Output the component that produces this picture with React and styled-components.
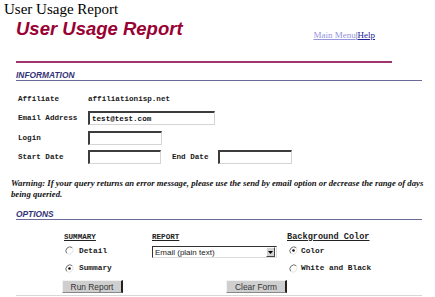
import React from "react";
import styled, { createGlobalStyle } from "styled-components";

const GlobalStyle = createGlobalStyle`
  html, body {
    margin: 0;
    padding: 0;
    background: #fff;
  }
  body {
    font-family: "Liberation Serif", "Times New Roman", serif;
    color: #000;
  }
`;

const mono = `"Liberation Mono", "Courier New", monospace`;
const sans = `"Liberation Sans", Arial, sans-serif`;

const Page = styled.div`
  width: 435px;
  height: 297px;
  overflow: hidden;
`;

const DocTitle = styled.div`
  font-size: 15px;
  line-height: 18px;
  padding-left: 4px;
`;

const Header = styled.div`
  display: flex;
  align-items: flex-end;
  height: 22px;
  width: 392px;
  padding-left: 16px;
  box-sizing: border-box;
`;

const Title = styled.h1`
  margin: 0;
  font-family: ${sans};
  font-size: 18.5px;
  line-height: 22px;
  font-weight: bold;
  font-style: italic;
  color: #990033;
`;

const Nav = styled.div`
  margin-left: auto;
  margin-right: 17px;
  font-size: 9px;
  line-height: 10px;
  color: #222288;
`;

const NavLink = styled.a`
  color: ${(p) => (p.$visited ? "#9595e0" : "#222299")};
  text-decoration: underline;
  cursor: pointer;
`;

const Rule = styled.div`
  margin: 21px 0 0 16px;
  width: 376px;
  height: 2px;
  background: #a0356e;
`;

const SectionHead = styled.div`
  margin: ${(p) => p.$top}px 0 0 16px;
  width: 406px;
  height: 9px;
  line-height: 9px;
  font-family: ${sans};
  font-size: 8.4px;
  font-weight: bold;
  font-style: italic;
  color: #333377;
  border-bottom: 1px solid #6a6a96;
`;

const InfoTable = styled.div`
  margin: 8px 0 0 18px;
`;

const InfoRow = styled.div`
  display: flex;
  align-items: center;
  height: 19.5px;
`;

const Label = styled.span`
  font-family: ${mono};
  font-size: 7.6px;
  font-weight: bold;
  color: #1a1a1a;
  width: ${(p) => p.$w || 70}px;
  flex: none;
  white-space: nowrap;
`;

const Value = styled.span`
  font-family: ${mono};
  font-size: 7.6px;
  font-weight: bold;
  color: #1a1a1a;
`;

const TextInput = styled.input`
  box-sizing: border-box;
  width: ${(p) => p.$w}px;
  height: ${(p) => p.$h || 14}px;
  margin: 0 ${(p) => p.$mr || 0}px 0 0;
  padding: 0 2px;
  font-family: ${mono};
  font-size: 7.6px;
  font-weight: bold;
  color: #111;
  background: #fff;
  border-top: 2px solid #3c3c3c;
  border-left: 2px solid #3c3c3c;
  border-right: 1px solid #d4d4d4;
  border-bottom: 1px solid #d4d4d4;
  outline: none;
`;

const Warning = styled.p`
  margin: 11px 0 0 11px;
  font-size: 8.7px;
  line-height: 10.5px;
  font-weight: bold;
  font-style: italic;
  white-space: nowrap;
  color: #111;
`;

const OptionsGrid = styled.div`
  display: grid;
  grid-template-columns: 88px 135px 1fr;
  grid-template-rows: 10px 17.5px 17.5px;
  margin: 12px 0 0 64px;
`;

const ColHead = styled.span`
  font-family: ${mono};
  font-size: ${(p) => (p.$big ? 8.6 : 7.6)}px;
  line-height: 10px;
  font-weight: bold;
  color: #222;
  text-decoration: underline;
  white-space: nowrap;
`;

const RadioRow = styled.label`
  display: flex;
  align-items: center;
  gap: ${(p) => p.$gap || 5}px;
  padding-left: ${(p) => p.$indent || 1}px;
  font-family: ${mono};
  font-size: 7.8px;
  font-weight: bold;
  color: #1a1a1a;
  white-space: nowrap;
`;

const SelectBox = styled.div`
  align-self: start;
  margin-top: 4px;
  box-sizing: border-box;
  width: 125px;
  height: 12px;
  display: flex;
  align-items: center;
  border-top: 1px solid #333;
  border-left: 1px solid #333;
  border-right: 1px solid #ddd;
  border-bottom: 1px solid #ddd;
  background: #fff;
  font-family: ${sans};
  font-size: 8px;
  color: #222;
`;

const SelectText = styled.span`
  flex: 1;
  padding-left: 2px;
  white-space: nowrap;
`;

const ArrowButton = styled.span`
  box-sizing: border-box;
  width: 9px;
  height: 10px;
  margin-right: 1px;
  display: flex;
  align-items: center;
  justify-content: center;
  background: #d2d2d2;
  border-top: 1px solid #fafafa;
  border-left: 1px solid #fafafa;
  border-right: 1px solid #444;
  border-bottom: 1px solid #444;
`;

const ButtonRow = styled.div`
  display: flex;
  margin: 3px 0 0 62px;
  gap: 103px;
`;

const FormButton = styled.button`
  box-sizing: border-box;
  width: ${(p) => p.$w}px;
  height: 13px;
  padding: 0;
  font-family: ${sans};
  font-size: 8.4px;
  line-height: 10px;
  color: #333;
  background: #cfcfcf;
  border-top: 1px solid #f2f2f2;
  border-left: 1px solid #f2f2f2;
  border-right: 2px solid #222;
  border-bottom: 1px solid #888;
  cursor: pointer;
`;

const BottomLine = styled.div`
  margin: 2px 0 0 16px;
  width: 406px;
  height: 1px;
  background: #d8d8d8;
`;

function RadioIcon({ checked }) {
  return (
    <svg width="9" height="9" viewBox="0 0 9 9">
      <path d="M7.3 1.7 A4 4 0 0 0 1.7 7.3" fill="none" stroke="#6a6a6a" strokeWidth="1" />
      <path d="M1.7 7.3 A4 4 0 0 0 7.3 1.7" fill="none" stroke="#e2e2e2" strokeWidth="1" />
      {checked && <circle cx="4.5" cy="4.5" r="1.3" fill="#111" />}
    </svg>
  );
}

function DownArrow() {
  return (
    <svg width="5" height="3" viewBox="0 0 5 3">
      <path d="M0 0 H5 L2.5 3 Z" fill="#000" />
    </svg>
  );
}

export default function App() {
  return (
    <Page>
      <GlobalStyle />
      <DocTitle>User Usage Report</DocTitle>
      <Header>
        <Title>User Usage Report</Title>
        <Nav>
          <NavLink $visited>Main Menu</NavLink>|<NavLink>Help</NavLink>
        </Nav>
      </Header>
      <Rule />

      <SectionHead $top={8}>INFORMATION</SectionHead>
      <InfoTable>
        <InfoRow>
          <Label>Affiliate</Label>
          <Value>affiliationisp.net</Value>
        </InfoRow>
        <InfoRow>
          <Label>Email Address</Label>
          <TextInput $w={127} value="test@test.com" readOnly />
        </InfoRow>
        <InfoRow>
          <Label>Login</Label>
          <TextInput $w={74} value="" readOnly />
        </InfoRow>
        <InfoRow>
          <Label>Start Date</Label>
          <TextInput $w={73} $mr={11} value="" readOnly />
          <Label $w={46}>End Date</Label>
          <TextInput $w={74} value="" readOnly />
        </InfoRow>
      </InfoTable>

      <Warning>
        Warning: If your query returns an error message, please use the send by email option or decrease the range of days
        <br />
        being queried.
      </Warning>

      <SectionHead $top={11}>OPTIONS</SectionHead>
      <OptionsGrid>
        <ColHead>SUMMARY</ColHead>
        <ColHead>REPORT</ColHead>
        <ColHead $big>Background Color</ColHead>

        <RadioRow>
          <RadioIcon />
          Detail
        </RadioRow>
        <SelectBox>
          <SelectText>Email (plain text)</SelectText>
          <ArrowButton>
            <DownArrow />
          </ArrowButton>
        </SelectBox>
        <RadioRow $indent={2} $gap={3}>
          <RadioIcon checked />
          Color
        </RadioRow>

        <RadioRow>
          <RadioIcon checked />
          Summary
        </RadioRow>
        <span />
        <RadioRow $indent={2} $gap={3}>
          <RadioIcon />
          White and Black
        </RadioRow>
      </OptionsGrid>

      <ButtonRow>
        <FormButton $w={61}>Run Report</FormButton>
        <FormButton $w={61}>Clear Form</FormButton>
      </ButtonRow>
      <BottomLine />
    </Page>
  );
}
